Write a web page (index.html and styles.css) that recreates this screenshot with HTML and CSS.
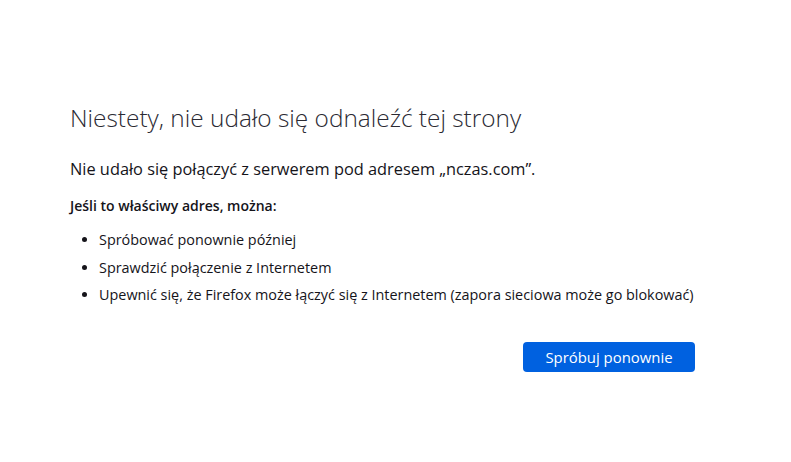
FILE: index.html
```html
<!DOCTYPE html>
<html lang="pl">
<head>
<meta charset="utf-8">
<title>Nie udało się odnaleźć tej strony</title>
<link rel="stylesheet" href="styles.css">
</head>
<body>
<main class="container">
  <h1 class="title">Niestety, nie udało się odnaleźć tej strony</h1>
  <p class="desc">Nie udało się połączyć z serwerem pod adresem „nczas.com”.</p>
  <p class="hint">Jeśli to właściwy adres, można:</p>
  <ul class="list">
    <li>Spróbować ponownie później</li>
    <li>Sprawdzić połączenie z Internetem</li>
    <li>Upewnić się, że Firefox może łączyć się z Internetem (zapora sieciowa może go blokować)</li>
  </ul>
  <div class="actions">
    <button class="retry">Spróbuj ponownie</button>
  </div>
</main>
</body>
</html>
```
FILE: styles.css
```css
html, body {
  margin: 0;
  padding: 0;
  background: #ffffff;
}
body {
  font-family: "Open Sans", "Noto Sans", sans-serif;
  color: #15141a;
}
.container {
  width: 625px;
  padding: 99px 0 0 70px;
}
.title {
  margin: 0;
  font-size: 24.4px;
  font-weight: 300;
  line-height: 38px;
  color: #2b2a33;
}
.desc {
  margin: 20px 0 0;
  font-size: 16.35px;
  line-height: 24px;
}
.hint {
  margin: 13px 0 0;
  font-size: 14px;
  font-weight: 600;
  line-height: 24px;
}
.list {
  margin: 12px 0 0;
  padding-left: 29px;
  font-size: 14.4px;
  line-height: 20px;
}
.list li {
  margin-bottom: 7.5px;
}
.actions {
  display: flex;
  justify-content: flex-end;
  margin-top: 37px;
}
.retry {
  width: 172px;
  height: 30px;
  border: none;
  border-radius: 4px;
  background: #0061e0;
  color: #ffffff;
  font-family: "Open Sans", "Noto Sans", sans-serif;
  font-size: 14.9px;
  font-weight: 500;
}
```
